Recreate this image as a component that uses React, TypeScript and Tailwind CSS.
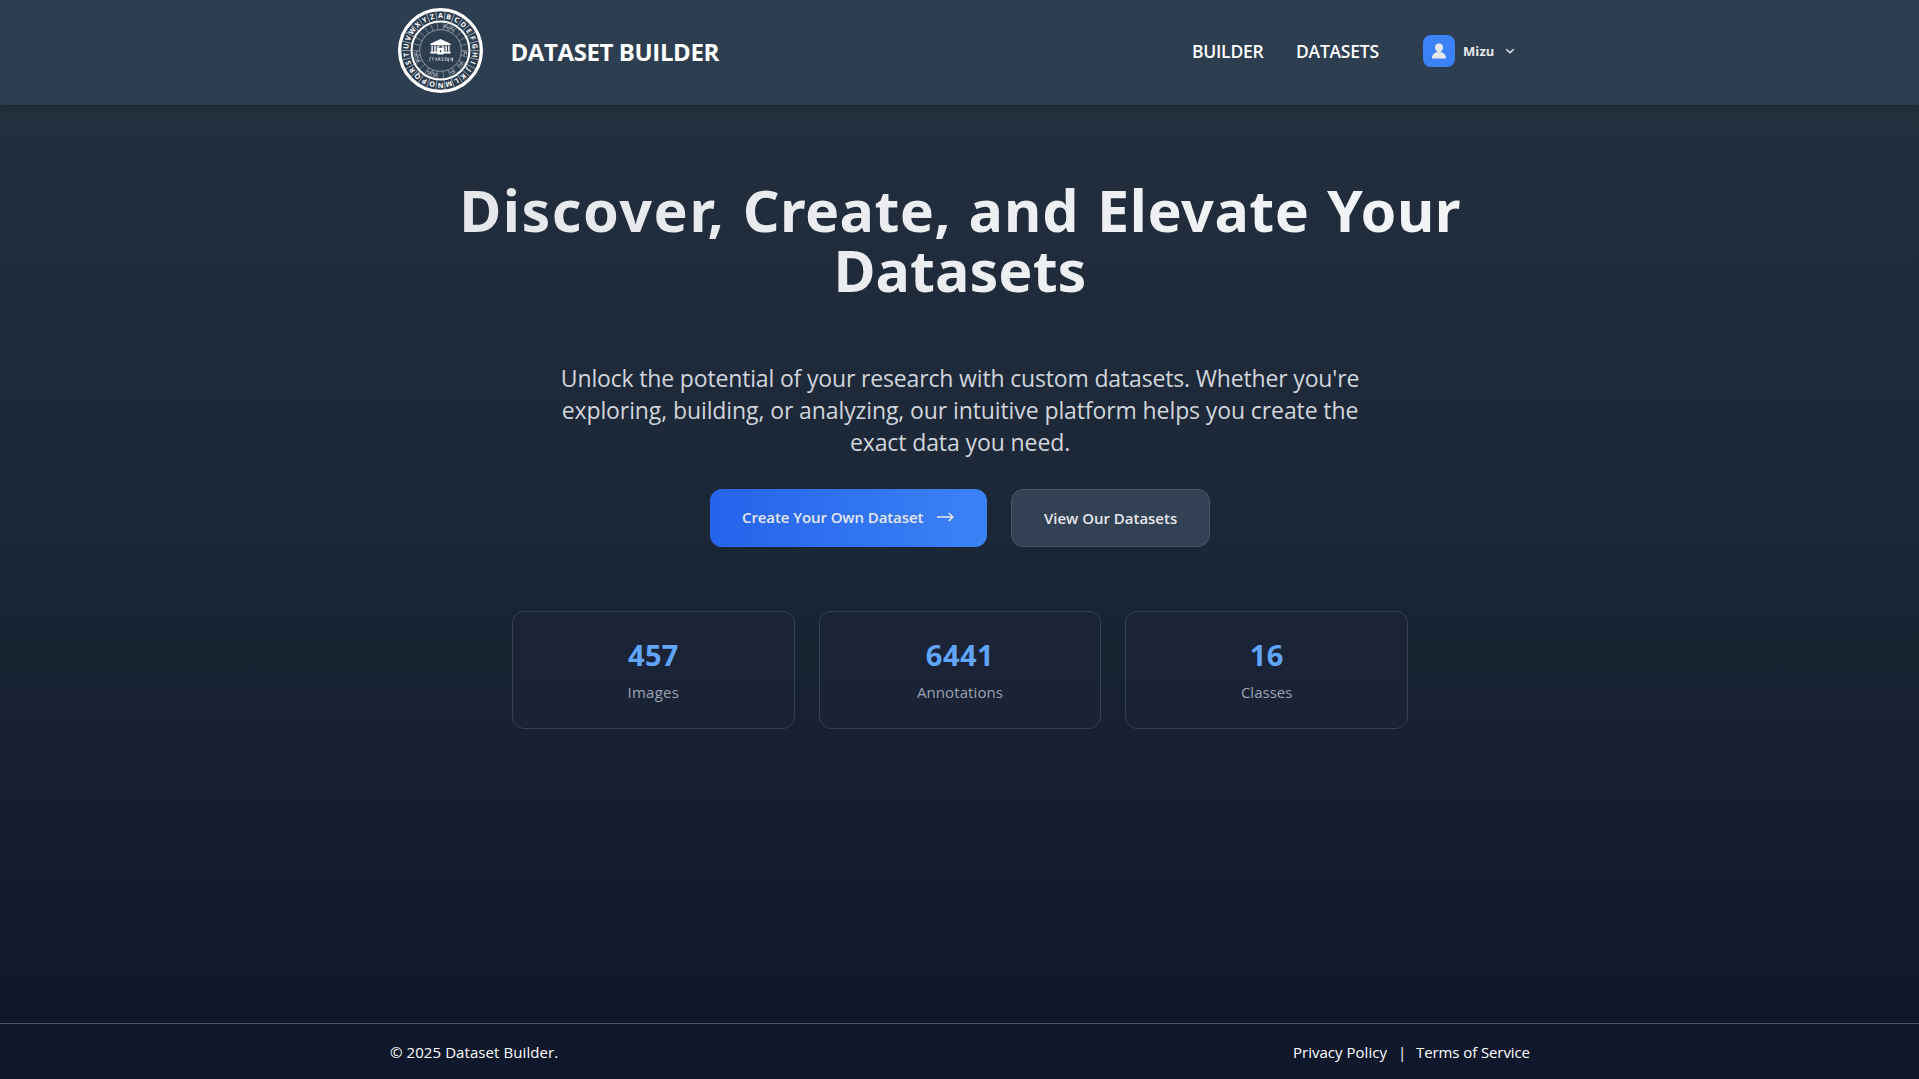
const letters = "ABCDEFGHIJKLMNOPQRSTUVWXYZ".split("");

const stats = [
  { value: "457", label: "Images", valueClass: "tracking-[0.3px]", labelClass: "tracking-[0.28px]" },
  { value: "6441", label: "Annotations", valueClass: "tracking-[0.5px]", labelClass: "tracking-[0.1px]" },
  { value: "16", label: "Classes", valueClass: "tracking-[0.3px]", labelClass: "tracking-[0px]" },
];

function Logo() {
  const step = 360 / letters.length;
  return (
    <svg viewBox="-42 -42 84 84" className="h-[85px] w-[85px] shrink-0" aria-hidden="true">
      <g fill="none" stroke="#fff">
        <circle r="40.4" strokeWidth="3.2" />
        <circle r="28.6" strokeWidth="2" />
        <circle r="20.6" strokeWidth="0.6" opacity="0.75" />
      </g>
      {letters.map((letter, i) => (
        <g key={letter} transform={`rotate(${i * step})`}>
          <text y="-31.7" textAnchor="middle" fontSize="7" fontWeight="700" fill="#fff" className="font-['Open_Sans',sans-serif]">
            {letter}
          </text>
          <line y1="-38.8" y2="-29.6" stroke="#fff" strokeWidth="0.6" opacity="0.8" transform={`rotate(${step / 2})`} />
          <line y1="-27.6" y2="-20.6" stroke="#fff" strokeWidth="0.5" opacity="0.6" transform={`rotate(${step / 2})`} />
        </g>
      ))}
      {[14, 28, 97, 125, 152, 194, 208, 249, 263].map((angle) => (
        <path key={angle} d="M-1.6 -22.3V-25.9H1.4M-1.6 -24H.8M1.5 -22.2V-24.6" fill="none" stroke="#fff" strokeWidth="0.7" opacity="0.7" transform={`rotate(${angle})`} />
      ))}
      <g fill="#fff">
        <path d="M-10 -6.6 0 -11.3 10 -6.6V-5.4H-10Z" />
        <path d="M-9 -5h1.4v6.3H-9ZM-6.2 -5h1.4v6.3h-1.4ZM-3.8 -5h1v6.3h-1ZM2.8 -5h1v6.3h-1ZM4.9 -5h1.4v6.3H4.9ZM7.6 -5H9v6.3H7.6Z" />
        <path d="M-10 1.1H10V3H-10Z" />
        <rect x="-3.2" y="-2.6" width="6.4" height="6.6" rx="0.7" />
      </g>
      <path d="M-1.8 -2.6V-4a1.8 1.8 0 0 1 3.6 0v1.4" fill="none" stroke="#fff" strokeWidth="1" />
      <path d="M0 -.4V1.8" stroke="#2d3e50" strokeWidth="1.3" />
      <path
        d="M-11.5 10.6c1.5-.8.8-4.4 2.4-4.8M-7.6 10V7.2h1.6M-4.8 10l.6-2.8 1.2 2.8M-1.8 10V7.2h1.2V10M.8 9.8h1.5V7.2H1M3.8 9.9h1.3l.2-2.7H4M6.6 7.2v2.5h1.6M8.3 7.2 7.8 11M10.4 7.2v2h1.4l.1-2-.5 4"
        fill="none"
        stroke="#fff"
        strokeWidth="0.7"
        opacity="0.85"
      />
    </svg>
  );
}

function Header() {
  return (
    <header className="relative z-10 h-[105px] shrink-0 bg-[#2d3e50] shadow-[0_2px_8px_rgba(0,0,0,0.18)]">
      <div className="mx-auto flex h-[102px] w-[1139px] items-center justify-between pr-[13px] pl-[7.5px]">
        <div className="flex items-center gap-7">
          <div className="-mt-px">
            <Logo />
          </div>
          <span className="mt-0.5 text-2xl font-bold tracking-[-0.4px] whitespace-nowrap text-white">DATASET BUILDER</span>
        </div>
        <div className="flex items-center">
          <nav className="flex gap-8 text-[17.5px] leading-7 font-semibold whitespace-nowrap text-white">
            <a className="w-[72px] tracking-[-0.25px]">BUILDER</a>
            <a className="w-[84px] tracking-[-0.25px]">DATASETS</a>
          </nav>
          <button className="ml-[43px] flex items-center gap-2">
            <span className="flex size-8 items-center justify-center rounded-lg bg-[#3b82f6]">
              <svg viewBox="0 0 16 16" className="size-4 fill-gray-200">
                <circle cx="8" cy="4.4" r="4" />
                <path d="M6.3 7.5h3.4v1.6c3 .6 5.3 2.6 5.3 6.4H1c0-3.8 2.3-5.8 5.3-6.4Z" />
              </svg>
            </span>
            <span className="w-[33px] text-left text-[13px] leading-5 font-bold tracking-[0.1px] text-gray-200">Mizu</span>
            <svg viewBox="0 0 12 12" className="size-3 fill-none stroke-gray-200 stroke-[1.5]">
              <path d="m2.3 4.2 3.7 3.6 3.7-3.6" />
            </svg>
          </button>
        </div>
      </div>
    </header>
  );
}

function Hero() {
  return (
    <main className="flex flex-1 flex-col items-center pt-[75px] pl-px">
      <h1 className="bg-gradient-to-r from-gray-200 to-gray-100 bg-clip-text text-center font-['Noto_Sans','Open_Sans',sans-serif] text-[57.5px] leading-[60px] font-bold tracking-[0.98px] [word-spacing:1.5px] whitespace-nowrap text-transparent">
        <span className="tracking-[1.5px]">Discover,</span> <span className="tracking-[0.35px]">Create,</span> and{" "}
        <span className="tracking-[0.5px]">Elevate</span> <span className="tracking-[0.4px]">Your</span>
        <br />
        <span className="tracking-[0px]">Datasets</span>
      </h1>
      <p className="mt-[62px] text-center text-[23px] leading-8 whitespace-nowrap text-gray-300">
        <span className="tracking-[-0.16px]">Unlock the potential of your research with custom datasets. Whether you're</span>
        <br />
        <span className="tracking-[-0.1px]">exploring, building, or analyzing, our intuitive platform helps you create the</span>
        <br />
        <span className="tracking-[-0.1px]">exact data you need.</span>
      </p>
      <div className="mt-[31px] flex h-[58px] gap-6 text-[15px] leading-6 font-semibold whitespace-nowrap text-gray-200">
        <a className="flex w-[277px] items-start rounded-xl bg-[linear-gradient(90deg,#2563eb,#3b82f6)] pt-4 pl-8">
          <span className="w-[193px] tracking-[-0.09px]">Create Your Own Dataset</span>
          <svg viewBox="0 0 20 20" className="mt-0.5 size-5 fill-none stroke-gray-200 stroke-[1.5]">
            <path d="M2 10h16M13.7 6l4.2 4-4.2 4" />
          </svg>
        </a>
        <a className="w-[199px] rounded-xl border border-[#475569] bg-[#334155] pt-4 pl-8 tracking-[-0.02px]">View Our Datasets</a>
      </div>
      <div className="mt-16 grid w-[896px] grid-cols-3 gap-6">
        {stats.map((s) => (
          <div key={s.label} className="h-[118px] rounded-xl border border-[#334155] bg-[#1c2438]/60 px-6 pt-[25px] text-center">
            <div className={`text-[29px] leading-9 font-bold text-[#60a5fa] ${s.valueClass}`}>{s.value}</div>
            <div className={`mt-[7px] text-[15px] leading-6 text-[#9ca3af] ${s.labelClass}`}>{s.label}</div>
          </div>
        ))}
      </div>
    </main>
  );
}

function Footer() {
  return (
    <footer className="h-14 shrink-0 border-t border-[#4b5563]">
      <div className="mx-auto flex w-[1141px] justify-between pt-4 pl-px text-[15px] leading-6 whitespace-nowrap text-white">
        <span className="tracking-[0.08px]">© 2025 Dataset Builder.</span>
        <div className="flex">
          <a className="w-[105px] tracking-[0.02px]">Privacy Policy</a>
          <span className="w-[18px]">|</span>
          <a className="w-[114px] tracking-[-0.09px]">Terms of Service</a>
        </div>
      </div>
    </footer>
  );
}

export default function App() {
  return (
    <div className="flex h-screen flex-col overflow-hidden bg-[#0f172a] bg-[linear-gradient(180deg,#232f3d_0%,#232f3d_9.7%,#1f2b3b_28%,#1b2736_50%,#182332_61%,#161f30_72%,#12192c_86%,#0f172a_100%)] font-['Open_Sans','Noto_Sans',sans-serif]">
      <Header />
      <Hero />
      <Footer />
    </div>
  );
}
